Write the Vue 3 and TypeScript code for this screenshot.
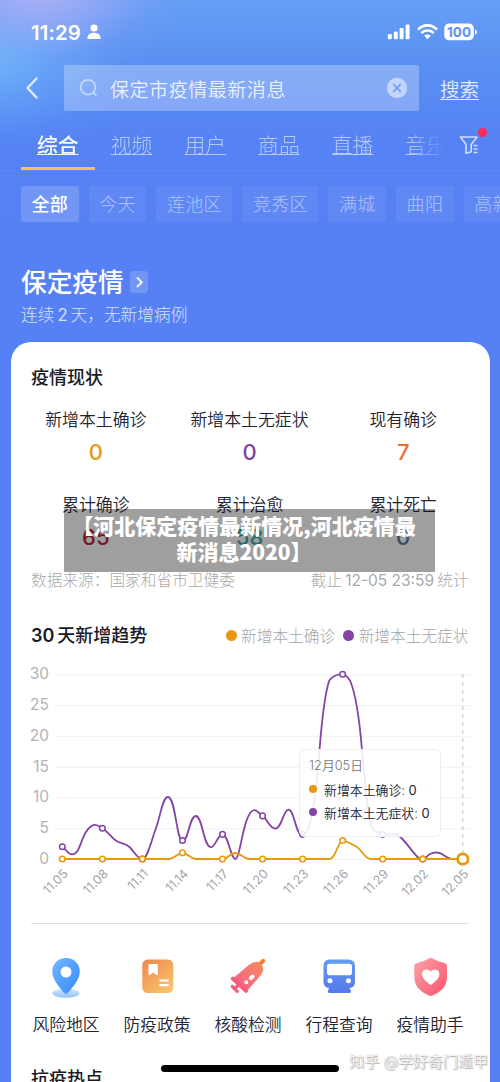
<script setup lang="ts">
interface Stat {
  label: string
  value: string
  tone: string
}
interface Point {
  x: number
  y: number
}

const tabs: string[] = ['综合', '视频', '用户', '商品', '直播', '音乐']
const chips: string[] = ['全部', '今天', '莲池区', '竞秀区', '满城', '曲阳', '高新区']
const stats: Stat[] = [
  { label: '新增本土确诊', value: '0', tone: 'amber' },
  { label: '新增本土无症状', value: '0', tone: 'purple' },
  { label: '现有确诊', value: '7', tone: 'orange' },
  { label: '累计确诊', value: '65', tone: 'red' },
  { label: '累计治愈', value: '58', tone: 'teal' },
  { label: '累计死亡', value: '0', tone: 'navy' },
]
const levels: number[] = [30, 25, 20, 15, 10, 5, 0]
const dates: string[] = ['11.05', '11.08', '11.11', '11.14', '11.17', '11.20', '11.23', '11.26', '11.29', '12.02', '12.05']

const px = (i: number): number => 61.8 + i * 40.05
const py = (v: number): number => 859 - v * 6.16
const toPoints = (values: number[]): Point[] => values.map((v, i) => ({ x: px(i), y: py(v) }))
const purplePoints = toPoints([2, 5, 0, 3, 4, 7, 4, 30, 4, 0])
const amberPoints = toPoints([0, 0, 0, 1, 0, 0, 0, 3, 0, 0])

const purplePath =
  'M61.8 847C66 849 67 854.4 71.5 854.4C77 854.4 79 847 82 839C85 831 90 824.8 94.5 824.8C97.5 824.8 99.5 827 101.9 828.5C107 831 111 838 116 841C121 844 125 843 129 847C134 852 137 859 141.9 859C147 859 151 840 155.5 828C160 816 162 797 167.5 797C175 797 176 841 182 841C188 841 189 816 195.3 816C202 816 203 847.2 210.5 847.2C215 847.2 217 834.5 222 834.5C228 834.5 230 859 235 859C240 859 243 810.2 254 810.2C257 810.2 259 814 262 816C267 819 269 828.6 275 828.6C281 828.6 283 809.6 288 809.6C294 809.6 295 835.5 302.1 835.5C312 834 316 784 319 750C321 725 324 694 328.8 680.5C333 675 338 674.2 342.2 674.2C344 674.2 347 677 349.5 680.5C355 693 359 720 361.5 750C366 797 368 832 376 832C378 832 380 833 382.2 834.4C388 837 393 830 400 837C407 844 412 852 417 857C420 860 423 859 426 857C430 852 438 851 443 855C447 858 449 859 452 859H462'
const amberPath =
  'M61.8 859H168C174 859 177 853 182 853C187 853 190 859 196 859H222C227 859 230 853 235 853C240 853 243 859 249 859H329C335 859 337 842 342.3 840.6C347 841 350 844 355 846C361 849 364 859 370 859H462'
</script>

<template>
  <div class="screen">
    <header class="status">
      <span class="time">11:29</span>
      <svg class="person" width="14" height="16" viewBox="0 0 14 16"><circle cx="7" cy="4" r="3.6" /><path d="M.5 15C0 11 3 8.8 7 8.8s7 2.200 6.500 6.200z" /></svg>
      <svg class="signals" width="92" height="20" viewBox="0 0 92 20">
        <rect x=".8" y="12" width="4" height="5.200" rx="1.200" /><rect x="6.800" y="9.500" width="4" height="7.700" rx="1.200" /><rect x="12.600" y="6" width="4" height="11.200" rx="1.200" /><rect x="18.600" y="2.500" width="4" height="14.700" rx="1.200" />
        <g class="wave"><path d="M31 7.700C36.200 1.900 44.800 1.900 50 7.700" /><path d="M34.300 11.200C37.600 7.500 43.400 7.500 46.700 11.200" /></g>
        <path d="M37.200 13.700C39 12 42 12 43.800 13.700L40.500 17.300Z" />
        <rect x="57.300" y="1.600" width="29.500" height="16.700" rx="4.800" /><path d="M88 7.300q2 .6 2 2.700t-2 2.700z" />
        <text x="72" y="15" text-anchor="middle" class="charge">100</text>
      </svg>
    </header>

    <div class="search">
      <svg class="back" width="14" height="24" viewBox="0 0 14 24"><path d="M11.500 2.500L2.500 12l9 9.500" /></svg>
      <div class="field">
        <svg class="lens" width="20" height="20" viewBox="0 0 20 20"><circle cx="9" cy="9.200" r="7.400" /><path d="M14.200 14.500l3.200 3.200" /></svg>
        <span class="query">保定市疫情最新消息</span>
        <svg class="clear" width="22" height="22" viewBox="0 0 22 22"><circle cx="11" cy="11" r="10.200" /><path d="M7.200 7.200l7.600 7.600M14.800 7.200l-7.600 7.600" /></svg>
      </div>
      <span class="go">搜索</span>
    </div>

    <nav class="tabs">
      <div class="tab-list">
        <div v-for="(tab, i) in tabs" :key="tab" class="tab" :class="{ active: i === 0 }"><span>{{ tab }}</span></div>
      </div>
      <div class="filter">
        <svg width="20" height="20" viewBox="0 0 20 20"><path d="M1.500 2H18L12.200 9.500V16.800L7 18.300V9.500Z" /><path d="M14.500 10.500h4M14.500 14h4M14.500 17.500h4" /></svg>
        <i class="alert"></i>
      </div>
    </nav>

    <div class="chips">
      <span v-for="(chip, i) in chips" :key="chip" class="chip" :class="{ active: i === 0 }">{{ chip }}</span>
    </div>

    <div class="place">
      <h1>保定疫情</h1>
      <span class="more"><svg width="18" height="22" viewBox="0 0 18 22"><path d="M7 6.500l4.800 4.700L7 16" /></svg></span>
    </div>
    <p class="summary">连续<b>2</b>天，无新增病例</p>

    <main class="card">
      <h2 class="card-title">疫情现状</h2>
      <div class="stats">
        <div v-for="s in stats" :key="s.label" class="stat">
          <span class="stat-label">{{ s.label }}</span>
          <span class="stat-value" :class="s.tone">{{ s.value }}</span>
        </div>
      </div>
      <div class="source"><span>数据来源：国家和省市卫健委</span><span class="until">截止<b>12-05 23:59</b>统计</span></div>

      <div class="trend">
        <h2><b>30</b>天新增趋势</h2>
        <div class="legend"><i class="dot amber-bg"></i><span>新增本土确诊</span><i class="dot purple-bg"></i><span>新增本土无症状</span></div>
      </div>
      <div class="chart">
        <svg width="479" height="240" viewBox="10.500 660 479 240">
          <g v-for="v in levels" :key="v">
            <line x1="55" x2="469.500" :y1="py(v) + 0.5" :y2="py(v) + 0.5" class="grid" />
            <text x="48.500" :y="py(v) + 5" text-anchor="end" class="level">{{ v }}</text>
          </g>
          <line x1="462.300" x2="462.300" y1="674" y2="859" class="cursor" />
          <path :d="purplePath" class="line purple-line" />
          <circle v-for="p in purplePoints" :key="p.x" :cx="p.x" :cy="p.y" r="2.800" class="mark purple-line" />
          <path :d="amberPath" class="line amber-line" />
          <circle v-for="p in amberPoints" :key="p.x" :cx="p.x" :cy="p.y" r="2.800" class="mark amber-line" />
          <circle cx="462.300" cy="859" r="5.200" class="current" />
          <text v-for="(d, i) in dates" :key="d" :transform="`translate(${px(i) + 6.5} 874.500) rotate(-45)`" text-anchor="end" class="date">{{ d }}</text>
        </svg>
        <div class="tip">
          <div class="tip-date">12月05日</div>
          <div class="tip-row"><i class="amber-bg"></i><span>新增本土确诊: <b>0</b></span></div>
          <div class="tip-row"><i class="purple-bg"></i><span>新增本土无症状: <b>0</b></span></div>
        </div>
      </div>

      <div class="divider"></div>
      <div class="tools">
        <div class="tool">
          <svg width="44" height="44" viewBox="0 0 44 44">
            <defs>
              <linearGradient id="pin" x1="0" y1="0" x2="1" y2="1"><stop stop-color="#72b7ff" /><stop offset="1" stop-color="#3588fb" /></linearGradient>
              <linearGradient id="pool" x1="0" y1="0" x2="0" y2="1"><stop stop-color="#d4e8ff" /><stop offset="1" stop-color="#8fc0fd" /></linearGradient>
            </defs>
            <ellipse cx="22" cy="38.200" rx="13.500" ry="4.600" fill="url(#pool)" />
            <path d="M22 3C14 3 8.300 9 8.300 16.500C8.300 24.500 15 31.500 20 37.800Q22 40 24 37.800C29 31.500 35.800 24.500 35.800 16.500C35.800 9 30 3 22 3Z" fill="url(#pin)" /><circle cx="22" cy="17" r="5.500" fill="#fff" />
          </svg><span>风险地区</span>
        </div>
        <div class="tool">
          <svg width="44" height="44" viewBox="0 0 44 44">
            <defs><linearGradient id="book" x1="0" y1="0" x2=".7" y2="1"><stop stop-color="#ee8650" /><stop offset="1" stop-color="#f9c268" /></linearGradient></defs>
            <rect x="7.300" y="4.500" width="31" height="33.500" rx="5.500" fill="url(#book)" />
            <path d="M13.500 10q0-1 1-1h7.300q1 0 1 1v9.500q0 1-1 .4L18 17.800l-3.500 2.300q-1 .4-1-.6Z" fill="#fff" /><path d="M25.300 25.500h7.500M25.300 30.200h7.500" stroke="#fff" stroke-width="2.200" stroke-linecap="round" />
          </svg><span>防疫政策</span>
        </div>
        <div class="tool">
          <svg width="44" height="44" viewBox="0 0 44 44">
            <defs><linearGradient id="shot" gradientUnits="userSpaceOnUse" x1="8" y1="36" x2="34" y2="8"><stop stop-color="#f65984" /><stop offset="1" stop-color="#f58a64" /></linearGradient></defs>
            <path d="M34 9l3.300-3.200" stroke="#f17d32" stroke-width="4" stroke-linecap="round" />
            <path d="M8 22.500L23.500 9.500Q30.500 4.500 35 8.500Q39.500 13.500 35 20L21 36Z" fill="url(#shot)" />
            <path d="M6.800 23.500L20 35.800" stroke="#f65b80" stroke-width="4" stroke-linecap="round" />
            <path d="M12.500 30L8.500 33.800M6.300 31.300L11.300 36.300" stroke="#f65b80" stroke-width="3.200" stroke-linecap="round" />
            <path d="M24.800 23.200l1.800-1.700" stroke="#fff" stroke-width="4" stroke-linecap="round" /><circle cx="20.300" cy="27.300" r="2" fill="#fff" />
          </svg><span>核酸检测</span>
        </div>
        <div class="tool">
          <svg width="44" height="44" viewBox="0 0 44 44">
            <defs><linearGradient id="train" x1="0" y1="0" x2="0" y2="1"><stop stop-color="#629df0" /><stop offset="1" stop-color="#5877ed" /></linearGradient></defs>
            <path d="M12.500 4.500H31.500Q38 4.500 38 11V27Q38 32.500 32.500 33L34 36.300Q34.300 38 32.500 38H12.500Q10.500 38 10.800 36.300L12 33Q6.500 32.500 6.500 27V11Q6.500 4.500 12.500 4.500Z" fill="url(#train)" />
            <rect x="10" y="8.700" width="25" height="11.500" rx="2.800" fill="#fff" /><circle cx="13" cy="25.800" r="2.500" fill="#fff" /><circle cx="31.500" cy="25.800" r="2.500" fill="#fff" />
          </svg><span>行程查询</span>
        </div>
        <div class="tool">
          <svg width="44" height="44" viewBox="0 0 44 44">
            <defs><linearGradient id="care" x1="0" y1="0" x2="1" y2="1"><stop stop-color="#faa3a5" /><stop offset="1" stop-color="#fc526d" /></linearGradient></defs>
            <path d="M21 3.500Q22.800 2.500 24.600 3.500Q30 6.800 36.500 8Q39 8.500 39 11V22C39 33 31 37.500 24.600 40.500Q22.800 41.400 21 40.500C14.500 37.500 6.300 33 6.300 22V11Q6.300 8.500 9 8Q15.500 6.800 21 3.500Z" fill="url(#care)" />
            <path d="M22.700 30Q13.500 24 14 18.500C14.500 14 20.500 13.300 22.700 17C25 13.300 31 14 31.400 18.500Q32 24 22.700 30Z" fill="#fff" />
          </svg><span>疫情助手</span>
        </div>
      </div>
      <h2 class="topics">抗疫热点</h2>
    </main>

    <div class="caption">【河北保定疫情最新情况,河北疫情最<br />新消息2020】</div>
    <div class="home"></div>
    <div class="watermark">知乎 @学好奇门遁甲</div>
  </div>
</template>

<style>
body {
  margin: 0;
}
</style>

<style scoped>
.screen {
  position: relative;
  width: 500px;
  height: 1082px;
  overflow: hidden;
  display: flex;
  flex-direction: column;
  color: #fff;
  font-family: Inter, "Noto Sans CJK SC", sans-serif;
  background:
    radial-gradient(ellipse 155px 95px at 40px -12px, rgba(186, 178, 246, 0.9), rgba(170, 172, 246, 0.55) 40%, rgba(140, 160, 246, 0.18) 72%, rgba(120, 155, 246, 0)),
    radial-gradient(ellipse 170px 105px at -14px 56px, rgba(112, 184, 250, 0.95), rgba(105, 175, 250, 0.5) 42%, rgba(95, 160, 248, 0.14) 75%, rgba(90, 150, 246, 0)),
    linear-gradient(180deg, #669ff5 0, #5a8ff2 65px, #5582f4 145px, #5581f5 220px, #5581f5 100%);
}
h1, h2, p {
  margin: 0;
}
svg {
  display: block;
  flex: none;
}
svg path, svg circle {
  stroke-linejoin: round;
}
.status {
  height: 64px;
  display: flex;
  align-items: center;
  flex: none;
}
.time {
  margin-left: 31px;
  width: 56px;
  font-size: 20.3px;
  letter-spacing: 0.15px;
  font-weight: 600;
  white-space: nowrap;
}
.person, .signals {
  fill: #fff;
}
.signals {
  margin-left: 286px;
}
.wave {
  fill: none;
  stroke: #fff;
  stroke-width: 2.600;
}
.charge {
  fill: #5d91f4;
  font-size: 13.5px;
  font-weight: 700;
}
.search {
  height: 48px;
  display: flex;
  align-items: center;
  flex: none;
}
.back {
  margin-left: 25px;
  fill: none;
  stroke: #dfeafd;
  stroke-width: 2.500;
  stroke-linecap: round;
}
.field {
  margin-left: 25px;
  width: 355px;
  height: 46px;
  display: flex;
  align-items: center;
  background: rgba(255, 255, 255, 0.27);
  border-radius: 2px;
}
.lens {
  margin-left: 15px;
  fill: none;
  stroke: rgba(255, 255, 255, 0.52);
  stroke-width: 1.700;
}
.query {
  margin-left: 11px;
  width: 276px;
  font-size: 19px;
  letter-spacing: 0.55px;
  font-weight: 350;
  color: #eaf1ff;
}
.clear circle {
  fill: rgba(255, 255, 255, 0.5);
}
.clear path {
  stroke: #759df3;
  stroke-width: 1.700;
}
.go {
  margin-left: 21px;
  font-size: 19.5px;
  font-weight: 350;
  color: #e3ecff;
  text-decoration: underline;
  text-decoration-thickness: 1.3px;
  text-underline-offset: 2px;
}
.tabs {
  height: 58px;
  display: flex;
  flex: none;
  border-bottom: 1px solid rgba(255, 255, 255, 0.06);
}
.tab-list {
  width: 427px;
  margin-left: 21px;
  display: flex;
  overflow: hidden;
  -webkit-mask-image: linear-gradient(90deg, #000 388px, transparent 425px);
  mask-image: linear-gradient(90deg, #000 388px, transparent 425px);
}
.tab {
  flex: none;
  box-sizing: border-box;
  width: 73.7px;
  height: 58px;
  padding-top: 19px;
  line-height: 30px;
  text-align: center;
  font-size: 20.8px;
  font-weight: 300;
  color: rgba(255, 255, 255, 0.56);
  text-decoration: underline;
  text-decoration-thickness: 1.2px;
  text-underline-offset: 1px;
}
.tab.active {
  color: #f5f9ff;
  font-weight: 500;
  border-bottom: 3px solid #eacb4a;
}
.filter {
  position: relative;
  margin-left: 11px;
  padding-top: 23px;
}
.filter svg {
  fill: none;
  stroke: rgba(255, 255, 255, 0.72);
  stroke-width: 1.600;
}
.alert {
  position: absolute;
  left: 18.500px;
  top: 15.500px;
  width: 9px;
  height: 9px;
  border-radius: 50%;
  background: #ff2b55;
}
.chips {
  display: flex;
  gap: 10.1px;
  flex: none;
  height: 36px;
  margin: 15px 0 0 21px;
}
.chip {
  flex: none;
  padding: 1px 10.5px 0;
  border-radius: 2px;
  line-height: 35px;
  font-size: 18px;
  letter-spacing: 0.3px;
  font-weight: 300;
  background: rgba(255, 255, 255, 0.06);
  color: rgba(255, 255, 255, 0.5);
}
.chip.active {
  background: rgba(255, 255, 255, 0.17);
  color: #fff;
  font-weight: 500;
}
.place {
  display: flex;
  align-items: center;
  height: 40px;
  margin: 40px 0 0 21px;
  flex: none;
}
h1 {
  font-size: 25.7px;
  font-weight: 500;
  line-height: 40px;
  padding-top: 1px;
}
.more {
  margin-left: 6px;
  border-radius: 4px;
  background: rgba(255, 255, 255, 0.17);
}
.more path {
  fill: none;
  stroke: #eef4ff;
  stroke-width: 2;
}
.summary {
  height: 24px;
  line-height: 24px;
  margin: 0 0 0 21px;
  font-size: 16.7px;
  font-weight: 300;
  color: #d5e1fd;
  padding-top: 1px;
}
.summary b {
  font-weight: 400;
  margin: 0 3px;
}
.card {
  width: 479px;
  height: 760px;
  margin: 15px 0 0 10.5px;
  flex: none;
  background: #fff;
  border-radius: 20px 20px 0 0;
  display: flex;
  flex-direction: column;
  color: #23232f;
}
.card h2 {
  font-size: 18px;
  font-weight: 500;
  line-height: 30px;
  color: #191a26;
}
.card .card-title {
  margin: 21px 0 0 20.5px;
}
.stats {
  display: grid;
  grid-template-columns: repeat(3, 153.7px);
  grid-template-rows: 85px 65px;
  margin: 12px 0 0 8.5px;
}
.stat {
  text-align: center;
}
.stat span {
  display: block;
}
.stat-label {
  font-size: 16.9px;
  font-weight: 350;
  line-height: 30px;
}
.stat .stat-value {
  font-size: 22px;
  font-weight: 500;
  line-height: 34px;
}
.amber { color: #e9980d; }
.purple { color: #8344a5; }
.orange { color: #ec702f; }
.red { color: #bd2836; }
.teal { color: #3da9a9; }
.navy { color: #5e7ba3; }
.source {
  display: flex;
  justify-content: space-between;
  margin: 14px 21px 0 20.5px;
  height: 24px;
  line-height: 24px;
  font-size: 15.7px;
  font-weight: 300;
  color: #aaa;
}
.source b {
  font-weight: 400;
  font-size: 15.5px;
  margin: 0 3px;
}
.trend {
  display: flex;
  justify-content: space-between;
  height: 30px;
  margin: 28px 21px 0 20.5px;
}
.trend b {
  font-weight: 600;
  margin-right: 3px;
}
.legend {
  display: flex;
  align-items: center;
  height: 28px;
  font-size: 15.7px;
  font-weight: 300;
  color: #a5a5a9;
}
.dot {
  width: 11px;
  height: 11px;
  border-radius: 50%;
  margin: 0 4.500px 0 8px;
}
.amber-bg { background: #e9980d; }
.purple-bg { background: #8344a5; }
.chart {
  position: relative;
  margin-top: 9px;
  height: 240px;
}
.grid {
  stroke: #f0f0f2;
  stroke-width: 1;
}
.level {
  font-size: 15.5px;
  fill: #b3b3b6;
}
.date {
  font-size: 12.5px;
  fill: #a5a5a9;
}
.cursor {
  stroke: #c8c8cc;
  stroke-width: 1.200;
  stroke-dasharray: 4 4;
}
.line {
  fill: none;
  stroke-width: 1.800;
}
.mark {
  fill: #fff;
  stroke-width: 1.500;
}
.purple-line { stroke: #8344a5; }
.amber-line { stroke: #e9980d; }
.current {
  fill: #fff;
  stroke: #e9980d;
  stroke-width: 2.700;
}
.tip {
  position: absolute;
  box-sizing: border-box;
  left: 288px;
  top: 89px;
  width: 142.500px;
  height: 88px;
  padding: 5px 0 0 9.500px;
  border: 1px solid #efeff3;
  border-radius: 6px;
  background: rgba(255, 255, 255, 0.88);
  white-space: nowrap;
}
.tip-date {
  font-size: 12.8px;
  line-height: 22px;
  font-weight: 350;
  color: #777;
}
.tip-row {
  display: flex;
  align-items: center;
  height: 23px;
  font-size: 12.9px;
  font-weight: 350;
}
.tip-date + .tip-row {
  margin-top: 1px;
}
.tip-row i {
  width: 8px;
  height: 8px;
  margin: -2px 7px 0 0;
  border-radius: 50%;
}
.tip-row b {
  font-weight: 400;
}
.divider {
  height: 1px;
  margin: 23px 20.5px 0;
  background: #dfdfe2;
  flex: none;
}
.tools {
  display: grid;
  grid-template-columns: repeat(5, 91px);
  margin: 31px 0 0 10px;
}
.tool {
  display: flex;
  flex-direction: column;
  align-items: center;
  height: 84px;
}
.tool span {
  margin-top: 11px;
  font-size: 16.8px;
  font-weight: 350;
  line-height: 30px;
}
.card .topics {
  margin: 25px 0 0 20.5px;
}
.caption {
  position: absolute;
  box-sizing: border-box;
  left: 64px;
  top: 509px;
  width: 371px;
  height: 63px;
  padding: 3px 11px 0 0;
  text-align: center;
  white-space: nowrap;
  font-family: "Noto Sans CJK SC", sans-serif;
  font-size: 21px;
  line-height: 26px;
  font-weight: 900;
  background: rgba(0, 0, 0, 0.376);
}
.home {
  position: absolute;
  left: 161px;
  top: 1065px;
  width: 178px;
  height: 7px;
  border-radius: 4px;
  background: #000;
}
.watermark {
  position: absolute;
  right: 12px;
  top: 1051px;
  font-size: 15px;
  font-weight: 350;
  line-height: 22px;
  white-space: nowrap;
  color: #f4f4f4;
  text-shadow: 0 0 1px #aaa, 1px 1px 1px #b0b0b0;
}
</style>
